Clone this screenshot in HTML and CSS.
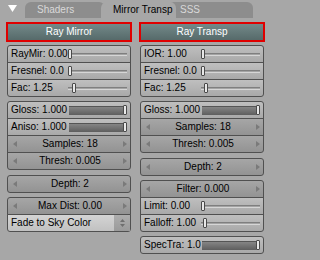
FILE: index.html
```html
<!DOCTYPE html>
<html>
<head>
<meta charset="utf-8">
<link rel="stylesheet" href="styles.css">
</head>
<body>
<div class="tabs">
  <div class="tri"><svg width="9" height="7" viewBox="0 0 9 7"><path d="M0 0H9L4.5 7Z" fill="#fff"/></svg></div>
  <div class="tab off t1">Shaders</div>
  <div class="tab on t2">Mirror Transp</div>
  <div class="tab off t3">SSS</div>
</div>
<div class="cols">
  <div class="col">
    <div class="tog">Ray Mirror</div>
    <div class="blk">
      <div class="row sli"><span class="lbl">RayMir: 0.00</span><span class="trk"><i class="groove"></i><i class="knob"></i></span></div>
      <div class="row sli"><span class="lbl">Fresnel: 0.0</span><span class="trk"><i class="groove"></i><i class="knob"></i></span></div>
      <div class="row sli"><span class="lbl">Fac: 1.25</span><span class="trk"><i class="groove"></i><i class="knob" style="margin-left:4px"></i></span></div>
    </div>
    <div class="blk">
      <div class="row sli"><span class="lbl">Gloss: 1.000</span><span class="trk"><i class="fill" style="width:calc(100% - 2px)"></i><i class="knob end"></i></span></div>
      <div class="row sli"><span class="lbl">Aniso: 1.000</span><span class="trk"><i class="fill" style="width:calc(100% - 2px)"></i><i class="knob end"></i></span></div>
      <div class="row num"><i class="al"></i><span class="v">Samples: 18</span><i class="ar"></i></div>
      <div class="row num"><i class="al"></i><span class="v">Thresh: 0.005</span><i class="ar"></i></div>
    </div>
    <div class="blk g5">
      <div class="row num"><i class="al"></i><span class="v">Depth: 2</span><i class="ar"></i></div>
    </div>
    <div class="blk">
      <div class="row num"><i class="al"></i><span class="v">Max Dist: 0.00</span><i class="ar"></i></div>
      <div class="row menu"><span class="v">Fade to Sky Color</span><span class="dd"><svg width="5" height="8" viewBox="0 0 5 8"><path d="M2.5 0L5 3H0Z M0 5H5L2.5 8Z" fill="#6f6f6f"/></svg></span></div>
    </div>
  </div>
  <div class="col">
    <div class="tog">Ray Transp</div>
    <div class="blk">
      <div class="row sli"><span class="lbl">IOR: 1.00</span><span class="trk"><i class="groove"></i><i class="knob"></i></span></div>
      <div class="row sli"><span class="lbl">Fresnel: 0.0</span><span class="trk"><i class="groove"></i><i class="knob"></i></span></div>
      <div class="row sli"><span class="lbl">Fac: 1.25</span><span class="trk"><i class="groove"></i><i class="knob" style="margin-left:3px"></i></span></div>
    </div>
    <div class="blk">
      <div class="row sli"><span class="lbl">Gloss: 1.000</span><span class="trk"><i class="fill" style="width:calc(100% - 2px)"></i><i class="knob end"></i></span></div>
      <div class="row num"><i class="al"></i><span class="v">Samples: 18</span><i class="ar"></i></div>
      <div class="row num"><i class="al"></i><span class="v">Thresh: 0.005</span><i class="ar"></i></div>
    </div>
    <div class="blk g5">
      <div class="row num"><i class="al"></i><span class="v">Depth: 2</span><i class="ar"></i></div>
    </div>
    <div class="blk">
      <div class="row num"><i class="al"></i><span class="v">Filter: 0.000</span><i class="ar"></i></div>
      <div class="row sli"><span class="lbl">Limit: 0.00</span><span class="trk"><i class="groove"></i><i class="knob"></i></span></div>
      <div class="row sli"><span class="lbl">Falloff: 1.00</span><span class="trk"><i class="groove"></i><i class="knob" style="margin-left:2px"></i></span></div>
    </div>
    <div class="blk">
      <div class="row sli"><span class="lbl">SpecTra: 1.0</span><span class="trk"><i class="fill" style="width:calc(100% - 2px)"></i><i class="knob end"></i></span></div>
    </div>
  </div>
</div>
</body>
</html>
```

FILE: styles.css
```css
* { box-sizing: border-box; margin: 0; padding: 0; }
html, body { background: #a7a7a7; }
body {
  width: 272px;
  height: 260px;
  overflow: hidden;
  font: 10px "Liberation Sans", Arial, sans-serif;
  color: #000;
}
.tabs { display: flex; height: 18px; padding-top: 2px; }
.tri { width: 25px; flex: none; padding: 3px 0 0 8px; }
.tri svg { display: block; }
.tab {
  height: 16px;
  line-height: 16px;
  padding-left: 12px;
  border-radius: 6px 6px 0 0;
  white-space: nowrap;
  overflow: hidden;
  flex: none;
}
.off { background: #8d8d8d; color: #d9d9d9; }
.on { background: #a7a7a7; z-index: 1; }
.t1 { width: 80px; }
.t2 { width: 75px; margin-left: -4px; }
.t3 { width: 85px; margin-left: -8px; }

.cols { display: flex; gap: 7px; padding: 4px 0 0 6px; }
.col { width: 126px; display: flex; flex-direction: column; }
.tog {
  height: 20px;
  border: 2px solid #e00000;
  background: linear-gradient(#738989, #566a6a);
  color: #fff;
  text-align: center;
  line-height: 16px;
  margin-bottom: 3px;
}
.blk { margin: 0 1px; display: flex; flex-direction: column; }
.blk + .blk { margin-top: 4px; }
.blk.g5 { margin-top: 5px; }
.row {
  height: 18px;
  border: 1px solid #505050;
  display: flex;
  align-items: center;
  line-height: 16px;
  white-space: nowrap;
}
.row + .row { margin-top: -1px; }
.row:first-child { border-radius: 3px 3px 0 0; }
.row:last-child { border-radius: 0 0 3px 3px; }
.row:only-child { border-radius: 3px; }

.sli { background: linear-gradient(#bfbfbf, #a9a9a9); }
.lbl { width: 60px; flex: none; padding-left: 3px; overflow: hidden; }
.trk { flex: 1; margin-right: 3px; height: 100%; display: grid; align-items: center; }
.trk > i { grid-area: 1 / 1; }
.groove { height: 3px; background: linear-gradient(#7f7f7f 0 1px, #a3a3a3 1px 2px, #d6d6d6 2px); }
.knob {
  width: 4px;
  height: 10px;
  border: 1px solid #4a4a4a;
  background: #e8e8e8;
  border-radius: 1px;
  justify-self: start;
}
.knob.end { justify-self: end; }
.fill {
  height: 9px;
  margin-left: 1px;
  justify-self: start;
  background: linear-gradient(#858585, #5e5e5e);
  border-top: 1px solid #555;
}

.num { background: linear-gradient(#a6a6a6, #939393); padding: 0 3px 0 5px; }
.num .v { flex: 1; text-align: center; }
.al, .ar { width: 0; height: 0; border-top: 3.5px solid transparent; border-bottom: 3.5px solid transparent; flex: none; }
.al { border-right: 4px solid #7a7a7a; }
.ar { border-left: 4px solid #7a7a7a; }

.menu { background: linear-gradient(#d4d4d4, #c1c1c1); padding-left: 3px; }
.menu .v { flex: 1; }
.dd {
  width: 16px;
  align-self: stretch;
  background: linear-gradient(#adadad, #9a9a9a);
  display: flex;
  align-items: center;
  justify-content: center;
}
.dd svg { display: block; }
```
